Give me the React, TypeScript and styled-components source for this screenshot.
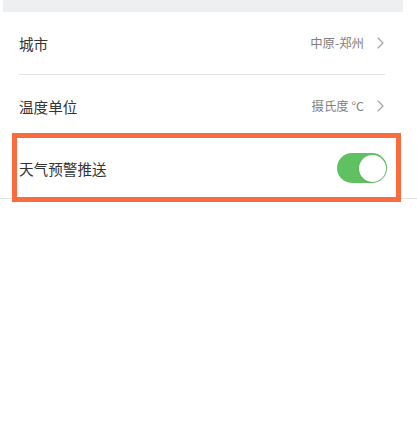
import React from 'react';
import styled, { createGlobalStyle } from 'styled-components';

const GlobalStyle = createGlobalStyle`
  html, body {
    margin: 0;
    padding: 0;
    background: #ffffff;
  }
  body {
    font-family: "Noto Sans CJK SC", "Noto Sans", "Liberation Sans", sans-serif;
  }
`;

const Page = styled.div`
  width: 417px;
  height: 447px;
  background: #ffffff;
  overflow: hidden;
`;

const TopBand = styled.div`
  height: 12px;
  width: 400px;
  margin-left: 3px;
  background: #eeeff1;
`;

const List = styled.div`
  display: flex;
  flex-direction: column;
`;

const Row = styled.div<{ $h?: number }>`
  position: relative;
  height: ${(p) => p.$h ?? 62}px;
  display: flex;
  align-items: center;
  justify-content: space-between;
  padding: 0 30px 0 19px;
`;

const Label = styled.span`
  font-size: 14.6px;
  color: #333333;
`;

const Value = styled.div`
  display: flex;
  align-items: center;
  gap: 13px;
  font-size: 12.4px;
  color: #808080;
  padding-right: 3px;
`;

const Divider = styled.div<{ $full?: boolean }>`
  height: 1px;
  background: #e3e3e3;
  margin: ${(p) => (p.$full ? '0' : '0 32px 0 19px')};
`;

const Highlight = styled.div`
  position: absolute;
  left: 12px;
  right: 16px;
  top: -5px;
  bottom: -4px;
  border: 5px solid #fa6b3d;
  pointer-events: none;
`;

const Track = styled.div<{ $on: boolean }>`
  width: 50px;
  height: 30px;
  border-radius: 15px;
  background: ${(p) => (p.$on ? '#5fc161' : '#e5e5e5')};
  display: flex;
  align-items: center;
  justify-content: ${(p) => (p.$on ? 'flex-end' : 'flex-start')};
  padding: 1.5px;
  box-sizing: border-box;
`;

const Knob = styled.div`
  width: 27px;
  height: 27px;
  border-radius: 50%;
  background: #ffffff;
  box-shadow: 0 1px 2px rgba(0, 0, 0, 0.12);
`;

const Chevron = () => (
  <svg width="7" height="12" viewBox="0 0 7 12" fill="none">
    <path d="M1 1l5 5-5 5" stroke="#a0a0a0" strokeWidth="1.1" strokeLinecap="round" strokeLinejoin="round" />
  </svg>
);

const App: React.FC = () => {
  return (
    <>
      <GlobalStyle />
      <Page>
        <TopBand />
        <List>
          <Row>
            <Label>城市</Label>
            <Value>
              <span>中原-郑州</span>
              <Chevron />
            </Value>
          </Row>
          <Divider />
          <Row>
            <Label>温度单位</Label>
            <Value>
              <span>摄氏度 °C</span>
              <Chevron />
            </Value>
          </Row>
          <Divider />
          <Row $h={60}>
            <Label>天气预警推送</Label>
            <Track $on>
              <Knob />
            </Track>
            <Highlight />
          </Row>
          <Divider $full />
        </List>
      </Page>
    </>
  );
};

export default App;
